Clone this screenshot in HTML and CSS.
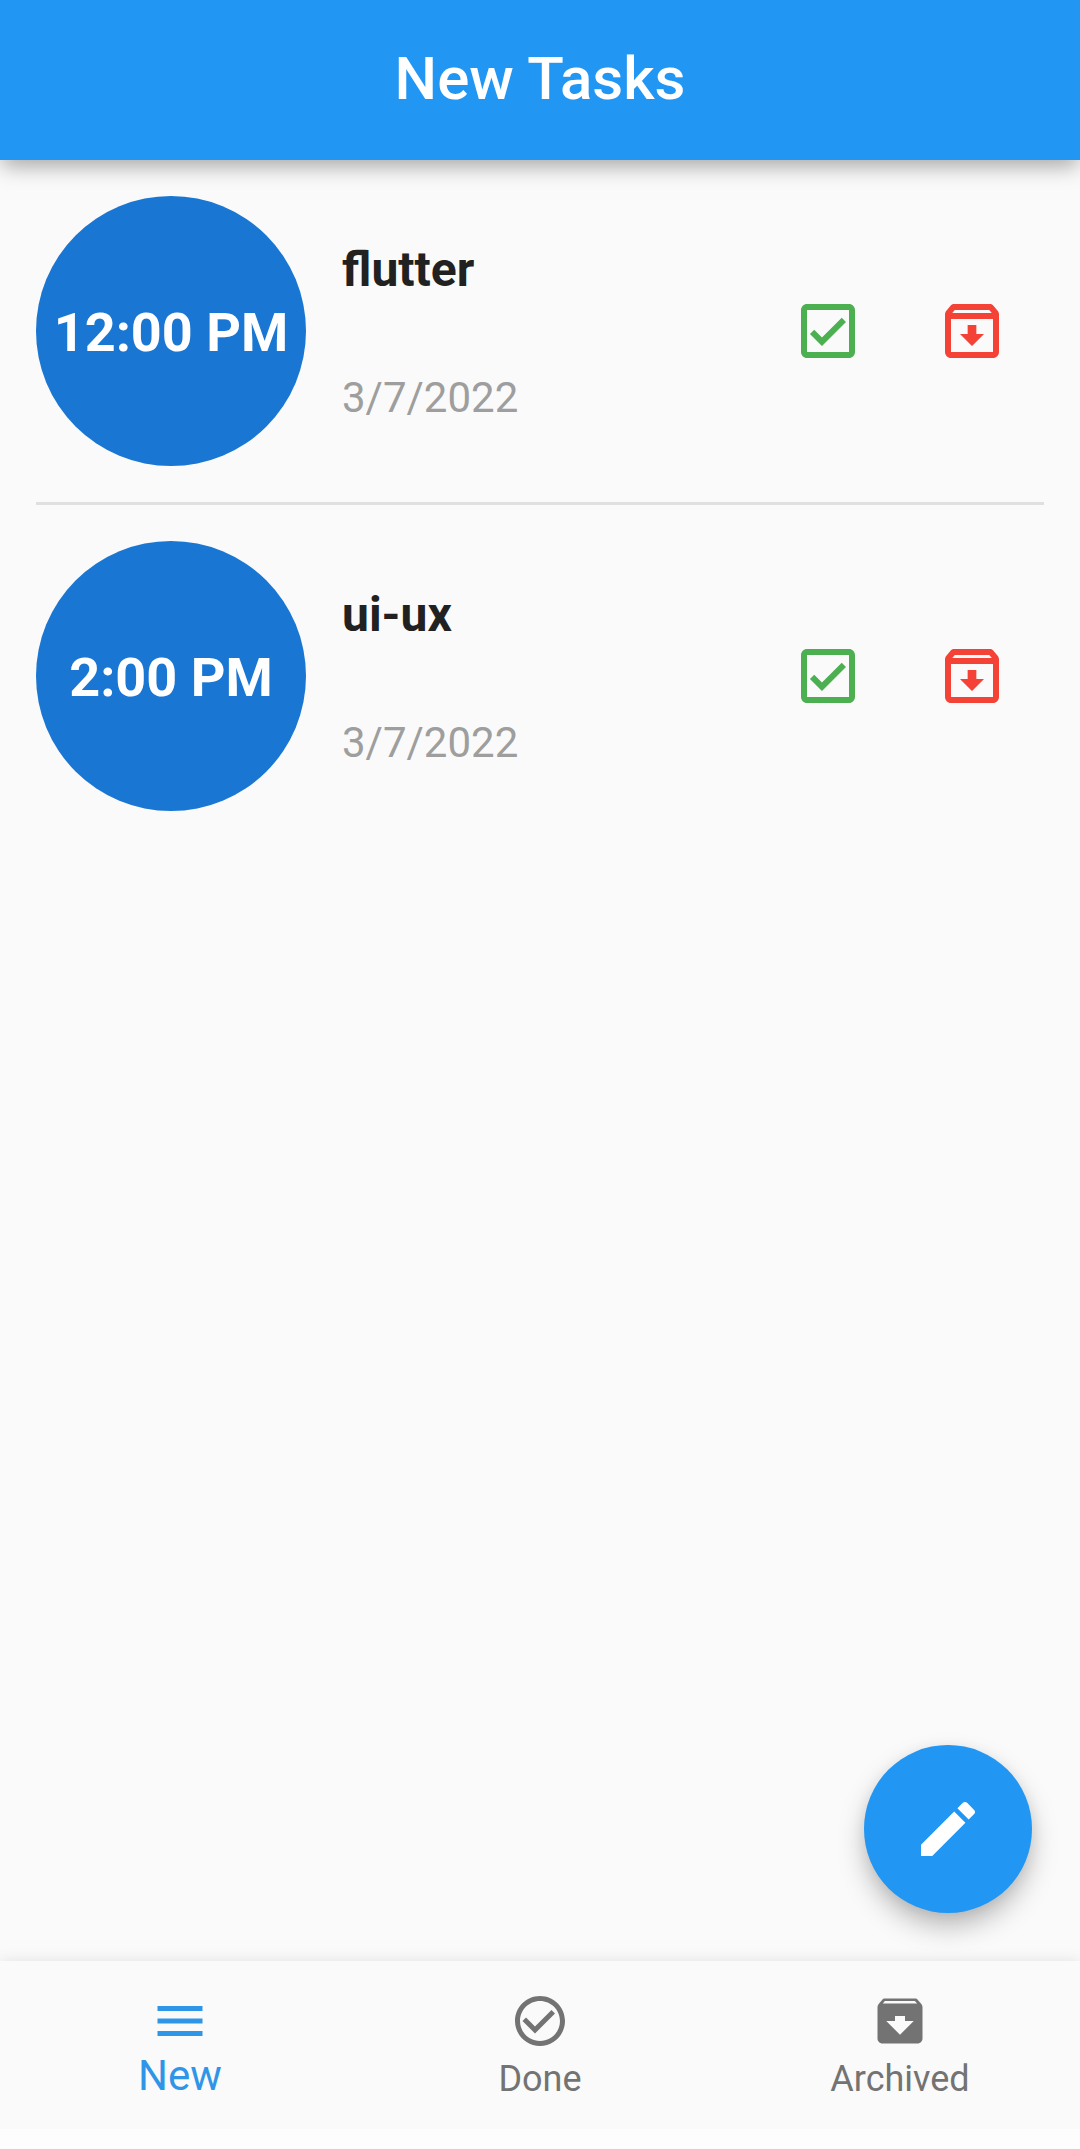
FILE: index.html
```html
<!DOCTYPE html>
<html lang="en">
<head>
<meta charset="utf-8">
<title>New Tasks</title>
<link rel="stylesheet" href="styles.css">
</head>
<body>
<svg class="sprite" aria-hidden="true">
  <symbol id="check-box" viewBox="0 0 24 24"><path d="M19 3H5c-1.1 0-2 .9-2 2v14c0 1.1.9 2 2 2h14c1.1 0 2-.9 2-2V5c0-1.1-.9-2-2-2zm0 16H5V5h14v14zM17.99 9l-1.41-1.42-6.59 6.59-2.58-2.57-1.42 1.41 4 3.99z"/></symbol>
  <symbol id="archive-outlined" viewBox="0 0 24 24"><path d="M20.54 5.23l-1.39-1.68C18.88 3.21 18.47 3 18 3H6c-.47 0-.88.21-1.16.55L3.46 5.23C3.17 5.57 3 6.02 3 6.5V19c0 1.1.9 2 2 2h14c1.1 0 2-.9 2-2V6.5c0-.48-.17-.93-.46-1.27zM6.24 5h11.52l.83 1H5.42l.82-1zM5 19V8h14v11H5zm8.45-9h-2.9v3H8l4 4 4-4h-2.55z"/></symbol>
</svg>
<div class="app">
  <header class="app-bar"><h1 class="app-title">New Tasks</h1></header>
  <main class="tasks">
    <article class="task">
      <div class="time">12:00 PM</div>
      <div class="details">
        <h2 class="name">flutter</h2>
        <p class="date">3/7/2022</p>
      </div>
      <div class="actions">
        <button class="action done" aria-label="Done"><svg class="icon"><use href="#check-box"/></svg></button>
        <button class="action archive" aria-label="Archive"><svg class="icon"><use href="#archive-outlined"/></svg></button>
      </div>
    </article>
    <hr class="divider">
    <article class="task">
      <div class="time">2:00 PM</div>
      <div class="details">
        <h2 class="name">ui-ux</h2>
        <p class="date">3/7/2022</p>
      </div>
      <div class="actions">
        <button class="action done" aria-label="Done"><svg class="icon"><use href="#check-box"/></svg></button>
        <button class="action archive" aria-label="Archive"><svg class="icon"><use href="#archive-outlined"/></svg></button>
      </div>
    </article>
  </main>
  <button class="fab" aria-label="Add task"><svg class="icon" viewBox="0 0 24 24"><path d="M3 17.25V21h3.75L17.81 9.94l-3.75-3.75L3 17.25zM20.71 7.04c.39-.39.39-1.02 0-1.41l-2.34-2.34c-.39-.39-1.02-.39-1.41 0l-1.83 1.83 3.75 3.75 1.83-1.83z"/></svg></button>
  <nav class="bottom-nav">
    <a class="tab active">
      <svg class="tab-icon" viewBox="0 0 24 24"><path d="M3 18h18v-2H3v2zm0-5h18v-2H3v2zm0-7v2h18V6H3z"/></svg>
      <span class="tab-label">New</span>
    </a>
    <a class="tab">
      <svg class="tab-icon" viewBox="0 0 24 24"><path d="M16.59 7.58L10 14.17l-3.59-3.58L5 12l5 5 8-8zM12 2C6.48 2 2 6.48 2 12s4.48 10 10 10 10-4.48 10-10S17.52 2 12 2zm0 18c-4.42 0-8-3.58-8-8s3.58-8 8-8 8 3.58 8 8-3.58 8-8 8z"/></svg>
      <span class="tab-label">Done</span>
    </a>
    <a class="tab">
      <svg class="tab-icon" viewBox="0 0 24 24"><path d="M20.54 5.23l-1.39-1.68C18.88 3.21 18.47 3 18 3H6c-.47 0-.88.21-1.16.55L3.46 5.23C3.17 5.57 3 6.02 3 6.5V19c0 1.1.9 2 2 2h14c1.1 0 2-.9 2-2V6.5c0-.48-.17-.93-.46-1.27zM12 17.5L6.5 12H10v-2h4v2h3.5L12 17.5zM5.12 5l.81-1h12l.94 1H5.12z"/></svg>
      <span class="tab-label">Archived</span>
    </a>
  </nav>
</div>
</body>
</html>
```
FILE: styles.css
```css
* { box-sizing: border-box; }

body {
  margin: 0;
  background: #fdfdfd;
  font-family: Roboto, "Liberation Sans", sans-serif;
}

h1, h2, p { margin: 0; }

button {
  padding: 0;
  border: 0;
  background: none;
}

svg { fill: currentColor; }

.sprite { display: none; }

.app {
  position: relative;
  display: flex;
  flex-direction: column;
  height: 2149px;
  padding-bottom: 20px;
  overflow: hidden;
}

.app-bar {
  z-index: 1;
  display: flex;
  align-items: center;
  justify-content: center;
  height: 160px;
  padding-bottom: 2px;
  flex: none;
  background: #2196f3;
  color: #fff;
  box-shadow: 0 8px 20px -2px rgba(0, 0, 0, .34);
}

.app-title {
  font-size: 60px;
  font-weight: 500;
  line-height: 70px;
}

.tasks {
  flex: 1;
  background: #fafafa;
}

.task {
  display: flex;
  align-items: center;
  gap: 36px;
  padding: 36px;
}

.time {
  display: flex;
  align-items: center;
  justify-content: center;
  flex: none;
  width: 270px;
  height: 270px;
  padding-top: 2px;
  border-radius: 50%;
  background: #1976d2;
  color: #fff;
  font-size: 54px;
  font-weight: 700;
}

.details {
  display: flex;
  flex: 1;
  flex-direction: column;
  gap: 75px;
}

.name {
  color: #212121;
  font-size: 48px;
  font-weight: 700;
  line-height: 57px;
}

.date {
  color: #9e9e9e;
  font-size: 42px;
  line-height: 49px;
}

.actions { display: flex; }

.action {
  display: grid;
  place-items: center;
  width: 144px;
  height: 144px;
}

.done { color: #4caf50; }
.archive { color: #f44336; }

.icon {
  display: block;
  width: 72px;
  height: 72px;
}

.divider {
  height: 3px;
  margin: 0 36px;
  border: 0;
  background: #e0e0e0;
}

/* Floats over the task list, above the bottom navigation. */
.fab {
  position: absolute;
  right: 48px;
  bottom: 236px;
  display: grid;
  place-items: center;
  width: 168px;
  height: 168px;
  border-radius: 50%;
  background: #2196f3;
  color: #fff;
  box-shadow: 0 14px 28px -2px rgba(0, 0, 0, .28), 0 2px 14px rgba(0, 0, 0, .06);
}

.bottom-nav {
  position: relative;
  display: flex;
  flex: none;
  height: 168px;
  background: #fafafa;
  box-shadow: 0 0 14px rgba(0, 0, 0, .1);
  clip-path: inset(-40px 0 0);
}

.tab {
  display: flex;
  flex: 1;
  flex-direction: column;
  align-items: center;
  padding-top: 30px;
  color: #737373;
}

.tab-icon {
  width: 60px;
  height: 60px;
}

.tab-label {
  padding-top: 3px;
  font-size: 36px;
  line-height: 50px;
}

.active { color: #2f95e7; }

.active .tab-label {
  padding-top: 0;
  font-size: 42px;
}
```
